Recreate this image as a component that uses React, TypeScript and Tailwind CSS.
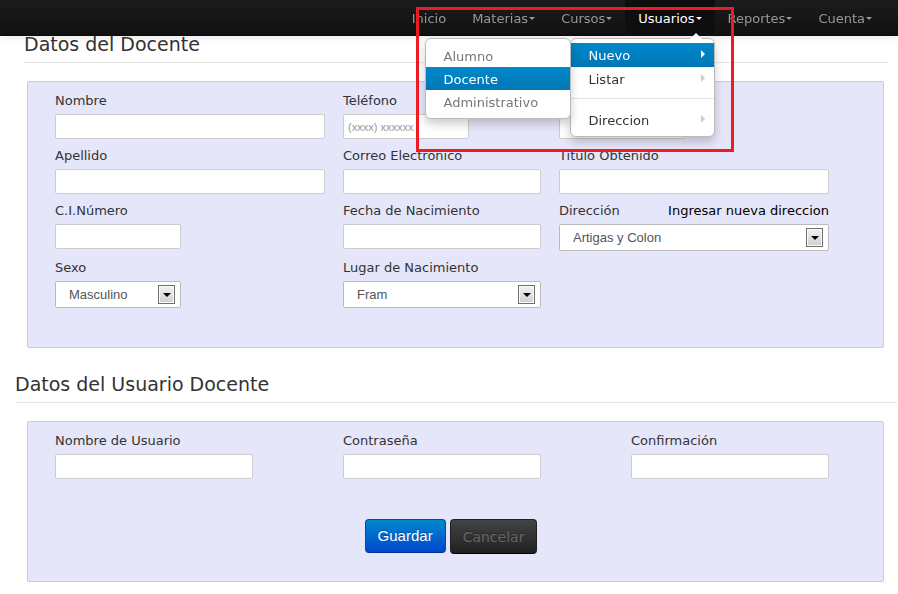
import type { ReactNode } from "react";

const SANS = "font-['DejaVu_Sans',Verdana,sans-serif]";
const ARIAL = "font-['Liberation_Sans',Arial,sans-serif]";

function Caret() {
  return (
    <span className="mt-[-2px] ml-px h-0 w-0 border-x-[3px] border-t-[3px] border-x-transparent border-t-current" />
  );
}

function NavItem({ label, caret = true }: { label: string; caret?: boolean }) {
  return (
    <li>
      <a
        href="#"
        className="flex h-9 items-center px-[13px] pt-0.5 text-[#999] [text-shadow:0_-1px_0_rgba(0,0,0,0.25)]"
      >
        {label}
        {caret && <Caret />}
      </a>
    </li>
  );
}

function MenuItem({ label, active = false }: { label: string; active?: boolean }) {
  return (
    <a
      href="#"
      className={
        active
          ? "flex h-6 items-center justify-between bg-linear-to-b from-[#0088cc] to-[#0077b3] pt-0.5 pr-[9px] pl-[18px] text-white"
          : "flex h-6 items-center justify-between pt-0.5 pr-[9px] pl-[18px] text-[#333]"
      }
    >
      {label}
      <span
        className={
          active
            ? "mt-[-4px] h-0 w-0 border-y-4 border-l-4 border-y-transparent border-l-white"
            : "mt-[-4px] h-0 w-0 border-y-4 border-l-4 border-y-transparent border-l-[#ccc]"
        }
      />
    </a>
  );
}

function SubItem({ label, active = false }: { label: string; active?: boolean }) {
  return (
    <li>
      <a
        href="#"
        className={
          active
            ? "flex h-[23px] items-center bg-linear-to-b from-[#0088cc] to-[#0077b3] pt-0.5 pl-[18px] text-white"
            : "flex h-[23px] items-center pt-0.5 pl-[18px] text-[#777]"
        }
      >
        {label}
      </a>
    </li>
  );
}

function UsersMenu() {
  return (
    <div className="absolute top-[38px] right-0 w-[145px] rounded-md border border-[#bbb] bg-white shadow-[0_5px_10px_rgba(0,0,0,0.2)]">
      <span className="absolute -top-[6px] right-3 h-0 w-0 border-x-[6px] border-b-[6px] border-x-transparent border-b-white" />
      <ul className="py-1">
        <li className="relative">
          <MenuItem label="Nuevo" active />
          <ul className="absolute -top-[5px] right-full w-[146px] rounded-md border border-[#bbb] bg-white py-[5px] shadow-[0_5px_10px_rgba(0,0,0,0.2)]">
            <SubItem label="Alumno" />
            <SubItem label="Docente" active />
            <SubItem label="Administrativo" />
          </ul>
        </li>
        <li>
          <MenuItem label="Listar" />
        </li>
        <li className="mt-[7px] mb-[9px] border-t border-[#e5e5e5]" />
        <li>
          <MenuItem label="Direccion" />
        </li>
      </ul>
    </div>
  );
}

function Navbar() {
  return (
    <nav className="fixed inset-x-0 top-0 z-10 h-9 border-b border-[#0a0a0a] bg-linear-to-b from-[#1b1b1b] to-[#111] shadow-[0_1px_10px_rgba(0,0,0,0.1)]">
      <ul className="flex justify-end pr-[13px]">
        <NavItem label="Inicio" caret={false} />
        <NavItem label="Materias" />
        <NavItem label="Cursos" />
        <li className="relative">
          <a href="#" className="flex h-9 items-center bg-[#0e0e0e] px-[13px] pt-0.5 text-white">
            Usuarios
            <Caret />
          </a>
          <UsersMenu />
          <span className="pointer-events-none absolute top-[7px] -right-[19px] -left-[209px] h-[145px] border-[3px] border-[#ed1c24]" />
        </li>
        <NavItem label="Reportes" />
        <NavItem label="Cuenta" />
      </ul>
    </nav>
  );
}

const INPUT =
  "block h-[25px] w-full rounded-xs border border-[#ccc] bg-white px-1 text-[11px] text-[#555] placeholder:text-[#999]";

function TextField({
  id,
  label,
  type = "text",
  placeholder,
}: {
  id: string;
  label: string;
  type?: string;
  placeholder?: string;
}) {
  return (
    <>
      <label htmlFor={id} className="mb-[3px] block">
        {label}
      </label>
      <input id={id} type={type} placeholder={placeholder} className={`${INPUT} ${ARIAL}`} />
    </>
  );
}

function SelectField({
  id,
  label,
  value,
  extra,
}: {
  id: string;
  label: string;
  value: string;
  extra?: ReactNode;
}) {
  return (
    <>
      <div className="mb-[3px] flex justify-between">
        <label htmlFor={id}>{label}</label>
        {extra}
      </div>
      <div className="relative">
        <select
          id={id}
          className={`block h-[27px] w-full appearance-none rounded-xs border border-[#bbb] bg-white pl-[13px] text-[13px] text-[#555] ${ARIAL}`}
        >
          <option>{value}</option>
        </select>
        <span className="pointer-events-none absolute top-1 right-[6px] flex h-[19px] w-[17px] items-center justify-center border border-[#707070] bg-linear-to-b from-[#f2f2f2] to-[#cfcfcf] shadow-[inset_0_0_0_1px_#fafafa]">
          <span className="h-0 w-0 border-x-4 border-t-4 border-x-transparent border-t-black" />
        </span>
      </div>
    </>
  );
}

function Heading({ children }: { children: ReactNode }) {
  return (
    <h2 className="border-b border-[#e5e5e5] pb-[10px] text-[19px] leading-4 text-[#333]">
      {children}
    </h2>
  );
}

const PANEL = "rounded-xs border border-[#ccc] bg-[#e6e6fa] pt-[9px] pr-[54px] pl-[27px]";

export default function App() {
  return (
    <div className={`min-h-screen bg-white text-[13px] leading-5 text-[#333] ${SANS}`}>
      <Navbar />
      <form className="pt-9" onSubmit={(e) => e.preventDefault()}>
        <div className="mr-[10px] ml-6">
          <Heading>Datos del Docente</Heading>
        </div>
        <div className={`mt-[18px] mr-[14px] ml-[27px] pb-[39px] ${PANEL}`}>
          <div className="grid grid-cols-11 gap-x-[18px] gap-y-[7px]">
            <div className="col-span-4">
              <TextField id="nombre" label="Nombre" />
            </div>
            <div className="col-span-2">
              <TextField id="telefono" label="Teléfono" placeholder="(xxxx) xxxxxx" />
            </div>
            <div className="col-span-2 col-start-8 flex items-end">
              <input aria-label="Celular" type="text" className={`${INPUT} ${ARIAL}`} />
            </div>

            <div className="col-span-4 col-start-1">
              <TextField id="apellido" label="Apellido" />
            </div>
            <div className="col-span-3">
              <TextField id="correo" label="Correo Electrónico" />
            </div>
            <div className="col-span-4">
              <TextField id="titulo" label="Titulo Obtenido" />
            </div>

            <div className="col-span-2">
              <TextField id="ci" label="C.I.Número" />
            </div>
            <div className="col-span-3 col-start-5">
              <TextField id="fecha" label="Fecha de Nacimiento" />
            </div>
            <div className="col-span-4">
              <SelectField
                id="direccion"
                label="Dirección"
                value="Artigas y Colon"
                extra={
                  <a href="#" className="text-black">
                    Ingresar nueva direccion
                  </a>
                }
              />
            </div>

            <div className="col-span-2">
              <SelectField id="sexo" label="Sexo" value="Masculino" />
            </div>
            <div className="col-span-3 col-start-5">
              <SelectField id="lugar" label="Lugar de Nacimiento" value="Fram" />
            </div>
          </div>
        </div>

        <div className="mt-7 mr-px ml-[15px]">
          <Heading>Datos del Usuario Docente</Heading>
        </div>
        <div className={`mt-[18px] mr-[14px] ml-[27px] pb-[27px] ${PANEL}`}>
          <div className="grid grid-cols-11 gap-x-[18px]">
            <div className="col-span-3">
              <TextField id="usuario" label="Nombre de Usuario" />
            </div>
            <div className="col-span-3 col-start-5">
              <TextField id="contrasena" label="Contraseña" type="password" />
            </div>
            <div className="col-span-3 col-start-9">
              <TextField id="confirmacion" label="Confirmación" type="password" />
            </div>
          </div>
          <div className="mt-10 flex items-start justify-center gap-1 pl-[18px]">
            <button
              type="submit"
              className={`h-[34px] rounded-sm border border-[#0044cc] border-b-[#003399] bg-linear-to-b from-[#0088cc] to-[#0044cc] px-3 text-[15px] text-white [text-shadow:0_-1px_0_rgba(0,0,0,0.25)] ${ARIAL}`}
            >
              Guardar
            </button>
            <button
              type="button"
              className="h-[35px] rounded-sm border border-[#222] border-b-black bg-linear-to-b from-[#444] to-[#222] px-3 text-[14px] text-[#666] [text-shadow:0_-1px_0_rgba(0,0,0,0.25)]"
            >
              Cancelar
            </button>
          </div>
        </div>
      </form>
    </div>
  );
}
